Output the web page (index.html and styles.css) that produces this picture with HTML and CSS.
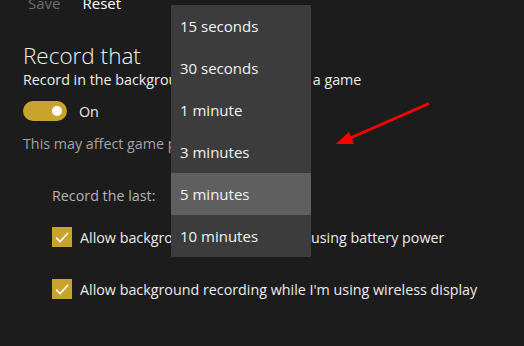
FILE: index.html
```html
<!DOCTYPE html>
<html lang="en">
<head>
    <meta charset="UTF-8">
    <meta name="viewport" content="width=device-width, initial-scale=1.0">
    <title>Game DVR</title>
    <link rel="stylesheet" href="styles.css">
</head>
<body>
    <div class="page">
        <div class="actions">
            <span class="action disabled">Save</span>
            <span class="action">Reset</span>
        </div>

        <h2 class="title">Record that</h2>
        <p class="label">Record in the background while I'm playing a game</p>
        <div class="toggle-row">
            <span class="toggle"><span class="knob"></span></span>
            <span>On</span>
        </div>
        <p class="hint">This may affect game performance</p>

        <div class="indent">
            <p class="sub">Record the last:</p>
            <div class="check">
                <span class="box">
                    <svg width="20" height="20" viewBox="0 0 20 20"><path d="M4 10.5 L8 14.5 L16 6" fill="none" stroke="#fff" stroke-width="1.6"/></svg>
                </span>
                <span>Allow background recording when using battery power</span>
            </div>
            <div class="check second">
                <span class="box">
                    <svg width="20" height="20" viewBox="0 0 20 20"><path d="M4 10.5 L8 14.5 L16 6" fill="none" stroke="#fff" stroke-width="1.6"/></svg>
                </span>
                <span>Allow background recording while I'm using wireless display</span>
            </div>
        </div>
    </div>

    <!-- open combobox list for "Record the last" -->
    <ul class="menu">
        <li>15 seconds</li>
        <li>30 seconds</li>
        <li>1 minute</li>
        <li>3 minutes</li>
        <li class="selected">5 minutes</li>
        <li>10 minutes</li>
    </ul>

    <svg class="arrow" width="524" height="346" viewBox="0 0 524 346">
        <line x1="428" y1="104" x2="348" y2="139" stroke="#f00" stroke-width="3" stroke-linecap="round"/>
        <polygon points="336,144 349,132 354,144" fill="#f00"/>
    </svg>
</body>
</html>
```

FILE: styles.css
```css
body { margin: 0; background: #1c1c1c; color: #ececec; font-family: "Open Sans", "Noto Sans", sans-serif; font-size: 14.3px; overflow: hidden; }
p { margin: 0; }
.page { padding-left: 23px; width: 524px; height: 346px; box-sizing: border-box; }

.actions { display: flex; gap: 22px; margin-top: -7px; height: 20px; line-height: 20px; padding-left: 5px; font-size: 15px; }
.action { color: #fff; }
.action.disabled { color: #6f6f6f; }

.title { margin: 28px 0 0; font-size: 22.5px; font-weight: 300; line-height: 29px; color: #f2f2f2; }
.label { line-height: 20px; }

.toggle-row { display: flex; align-items: center; gap: 12px; margin-top: 11px; height: 20px; }
.toggle { width: 44px; height: 20px; border-radius: 10px; background: #c9a42c; position: relative; }
.knob { position: absolute; right: 5px; top: 5px; width: 10px; height: 10px; border-radius: 50%; background: #fff; }

.hint { margin-top: 13px; line-height: 20px; color: #a3a3a3; }

.indent { padding-left: 29px; }
.sub { margin-top: 32px; line-height: 20px; color: #b4b4b4; }

.check { display: flex; align-items: center; gap: 8px; margin-top: 21px; height: 20px; }
.check.second { margin-top: 32px; }
.box { width: 20px; height: 20px; background: #c9a42c; display: flex; }

.menu { position: absolute; left: 171px; top: 5px; width: 140px; margin: 0; padding: 0; list-style: none; background: #3c3c3c; font-size: 15px; color: #f2f2f2; }
.menu li { height: 42px; line-height: 43px; padding-left: 9px; }
.menu li.selected { background: #5f5f5f; }

.arrow { position: absolute; left: 0; top: 0; pointer-events: none; }
```
